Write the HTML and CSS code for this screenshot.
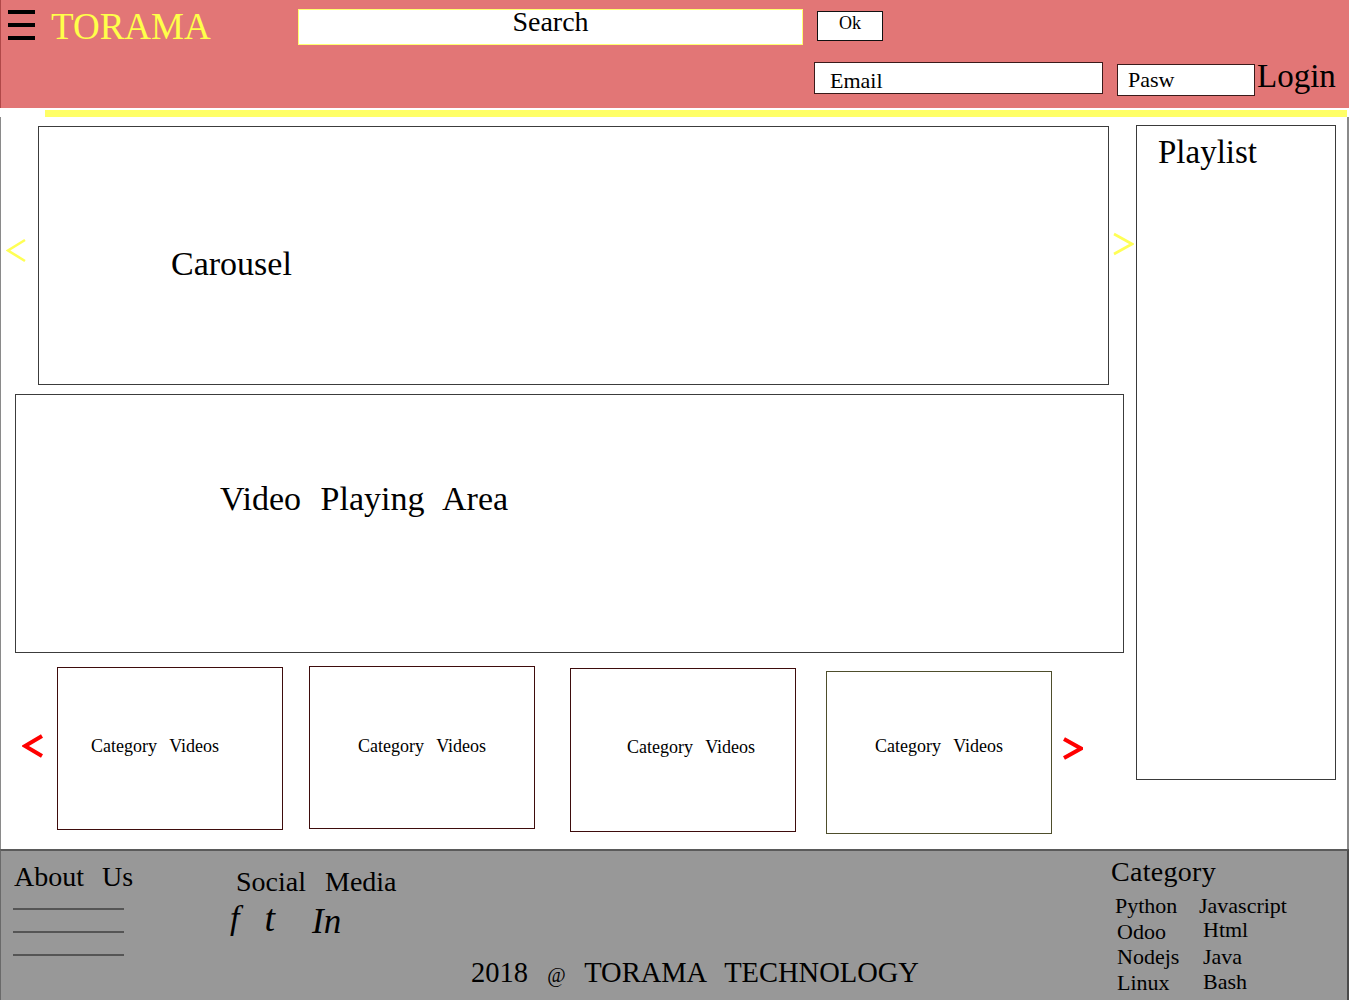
FILE: index.html
```html
<!DOCTYPE html>
<html lang="en">
<head>
<meta charset="utf-8">
<title>TORAMA</title>
<link rel="stylesheet" href="styles.css">
</head>
<body>
<div class="page">
  <header class="topbar">
    <div class="row1">
      <div class="burger"><span></span><span></span><span></span></div>
      <div class="brand">TORAMA</div>
      <div class="search">Search</div>
      <div class="okbtn">Ok</div>
    </div>
    <div class="row2">
      <div class="field email">Email</div>
      <div class="field pasw">Pasw</div>
      <div class="login">Login</div>
    </div>
  </header>
  <div class="accent"></div>
  <main class="main">
    <div class="content">
      <div class="carousel-row">
        <svg class="chev chev-yl" viewBox="0 0 20 25" width="20" height="25"><polyline points="19,2 2,12.5 19,23" /></svg>
        <div class="box carousel">Carousel</div>
        <svg class="chev chev-yr" viewBox="0 0 21 24" width="21" height="24"><polyline points="1,2 19,12 1,22" /></svg>
      </div>
      <div class="box video">Video Playing Area</div>
      <div class="cat-row">
        <svg class="chev chev-rl" viewBox="0 0 21 26" width="21" height="26"><polyline points="20,3 3,13 20,23" /></svg>
        <div class="cat cat-1">Category Videos</div>
        <div class="cat cat-2">Category Videos</div>
        <div class="cat cat-3">Category Videos</div>
        <div class="cat cat-4">Category Videos</div>
        <svg class="chev chev-rr" viewBox="0 0 20 25" width="20" height="25"><polyline points="1,3 18,12.5 1,22" /></svg>
      </div>
    </div>
    <aside class="playlist">Playlist</aside>
  </main>
  <footer class="footer">
    <div class="about">
      <div class="ftitle about-title">About Us</div>
      <div class="rule rule-first"></div>
      <div class="rule"></div>
      <div class="rule"></div>
    </div>
    <div class="social">
      <div class="ftitle social-title">Social Media</div>
      <div class="icons">
        <span class="ic ic-f">f</span>
        <span class="ic ic-t">t</span>
        <span class="ic ic-in">In</span>
      </div>
    </div>
    <div class="copy">2018 <span class="at">@</span> TORAMA TECHNOLOGY</div>
    <div class="fcat">
      <div class="ftitle cat-title">Category</div>
      <div class="catlist">
        <span>Python</span><span>Javascript</span>
        <span class="c1">Odoo</span><span class="c2 up2">Html</span>
        <span class="c1">Nodejs</span><span class="c2">Java</span>
        <span class="c1">Linux</span><span class="c2 bash">Bash</span>
      </div>
    </div>
  </footer>
</div>
</body>
</html>
```

FILE: styles.css
```css
* { box-sizing: border-box; }

html, body {
  margin: 0;
  padding: 0;
  background: #ffffff;
}

body {
  font-family: "Liberation Serif", "Times New Roman", serif;
  color: #000;
  overflow: hidden;
}

.page {
  width: 1349px;
  height: 1000px;
  display: flex;
  flex-direction: column;
}

/* ---------- header ---------- */
.topbar {
  height: 108px;
  background: #e27676;
  padding-top: 9px;
  border-left: 1px solid #b04848;
}

.row1 {
  display: flex;
  align-items: flex-start;
  height: 36px;
}

.burger {
  margin-left: 7px;
  margin-top: 1px;
  width: 27px;
  display: flex;
  flex-direction: column;
  gap: 9px;
}
.burger span {
  display: block;
  height: 4px;
  background: #000;
}

.brand {
  margin-left: 16px;
  margin-top: -1px;
  width: 247px;
  font-size: 37px;
  line-height: 37px;
  color: #ffff4a;
}

.search {
  width: 505px;
  height: 36px;
  background: #fff;
  border: 1px solid #ffff70;
  font-size: 28px;
  line-height: 24px;
  text-align: center;
}

.okbtn {
  margin-left: 14px;
  margin-top: 2px;
  width: 66px;
  height: 30px;
  background: #fff;
  border: 1px solid #111;
  font-size: 18px;
  line-height: 22px;
  text-align: center;
}

.row2 {
  display: flex;
  align-items: flex-start;
  margin-top: 17px;
}

.field {
  background: #fff;
  font-size: 22px;
  line-height: 24px;
}

.email {
  margin-left: 813px;
  width: 289px;
  height: 32px;
  border: 1px solid #3a1a1a;
  padding: 6px 0 0 15px;
}

.pasw {
  margin-left: 14px;
  margin-top: 2px;
  width: 138px;
  height: 32px;
  border: 1px solid #3a1a1a;
  padding: 3px 0 0 10px;
}

.login {
  margin-left: 2px;
  margin-top: -2px;
  font-size: 33px;
  line-height: 33px;
}

.accent {
  margin-top: 2px;
  margin-left: 45px;
  width: 1302px;
  height: 7px;
  background: #ffff66;
}

/* ---------- main ---------- */
.main {
  height: 732px;
  display: flex;
  border-left: 1px solid #8a8a8a;
  border-right: 2px solid #8a8a8a;
}

.content {
  width: 1134px;
  padding-top: 9px;
}

.box {
  border: 1px solid #3c3c3c;
  background: #fff;
}

.carousel-row {
  display: flex;
  align-items: flex-start;
}

.chev { display: block; flex: none; }
.chev polyline { fill: none; stroke-linejoin: miter; }

.chev-yl { margin-left: 5px; margin-top: 112px; }
.chev-yr { margin-left: 4px; margin-top: 106px; }
.chev-yl polyline, .chev-yr polyline { stroke: #ffff55; stroke-width: 2.6; }

.carousel {
  margin-left: 12px;
  width: 1071px;
  height: 259px;
  font-size: 34px;
  line-height: 34px;
  padding: 120px 0 0 132px;
}

.video {
  margin-left: 14px;
  margin-top: 9px;
  width: 1109px;
  height: 259px;
  font-size: 34px;
  line-height: 34px;
  padding: 87px 0 0 204px;
  word-spacing: 11px;
}

.cat-row {
  display: flex;
  align-items: flex-start;
  margin-top: 13px;
}

.chev-rl { margin-left: 21px; margin-top: 67px; }
.chev-rr { margin-left: 11px; margin-top: 70px; }
.chev-rl polyline, .chev-rr polyline { stroke: #ff0000; stroke-width: 4; }

.cat {
  width: 226px;
  height: 163px;
  border: 1px solid #3e0c0c;
  background: #fff;
  font-size: 18px;
  line-height: 18px;
  word-spacing: 8px;
  padding-top: 69px;
  white-space: nowrap;
}

.cat-1 { margin-left: 14px; margin-top: 1px; padding-left: 33px; }
.cat-2 { margin-left: 26px; padding-left: 48px; padding-top: 70px; }
.cat-3 { margin-left: 35px; margin-top: 2px; height: 164px; padding-left: 56px; }
.cat-4 { margin-left: 30px; margin-top: 5px; padding-left: 48px; padding-top: 65px; border-color: #4e4e2c; }

.playlist {
  margin-left: 1px;
  margin-top: 8px;
  width: 200px;
  height: 655px;
  border: 1px solid #3a3a3a;
  font-size: 33px;
  line-height: 33px;
  padding: 10px 0 0 21px;
}

/* ---------- footer ---------- */
.footer {
  height: 151px;
  background: #989898;
  border-top: 2px solid #5a5a5a;
  border-left: 1px solid #6a6a6a;
  border-right: 2px solid #4a4a4a;
  display: flex;
  align-items: flex-start;
}

.ftitle {
  font-size: 28px;
  line-height: 28px;
  word-spacing: 10px;
  white-space: nowrap;
}

.about {
  margin-left: 12px;
  width: 215px;
  padding-top: 12px;
}
.about-title { padding-left: 1px; word-spacing: 11px; }

.rule {
  width: 111px;
  height: 2px;
  background: #555;
  margin-top: 21px;
}
.rule-first { margin-top: 17px; }

.social {
  width: 243px;
  padding-top: 17px;
}
.social-title { margin-left: 8px; word-spacing: 12px; }

.icons {
  display: flex;
  align-items: flex-start;
  margin-top: 3px;
  font-style: italic;
}
.ic { display: block; }
.ic-f { font-size: 34px; line-height: 30px; margin-left: 2px; margin-top: 4px; }
.ic-t { font-size: 38px; line-height: 30px; margin-left: 25px; margin-top: 4px; }
.ic-in { font-size: 35px; line-height: 30px; margin-left: 37px; margin-top: 8px; }

.copy {
  width: 640px;
  margin-top: 108px;
  font-size: 28.5px;
  line-height: 28px;
  word-spacing: 12px;
  white-space: nowrap;
}
.at { font-size: 20px; }

.fcat {
  padding-top: 7px;
}
.cat-title { word-spacing: 0; letter-spacing: 0.3px; }

.catlist {
  margin-top: 10px;
  margin-left: 4px;
  display: grid;
  grid-template-columns: 84px auto;
  row-gap: 5.7px;
  font-size: 22px;
  line-height: 20px;
}
.catlist .c1 { padding-left: 2px; }
.catlist .c2 { padding-left: 4px; }
.catlist .up2 { margin-top: -2px; }
.catlist .bash { margin-top: -1px; }
```
